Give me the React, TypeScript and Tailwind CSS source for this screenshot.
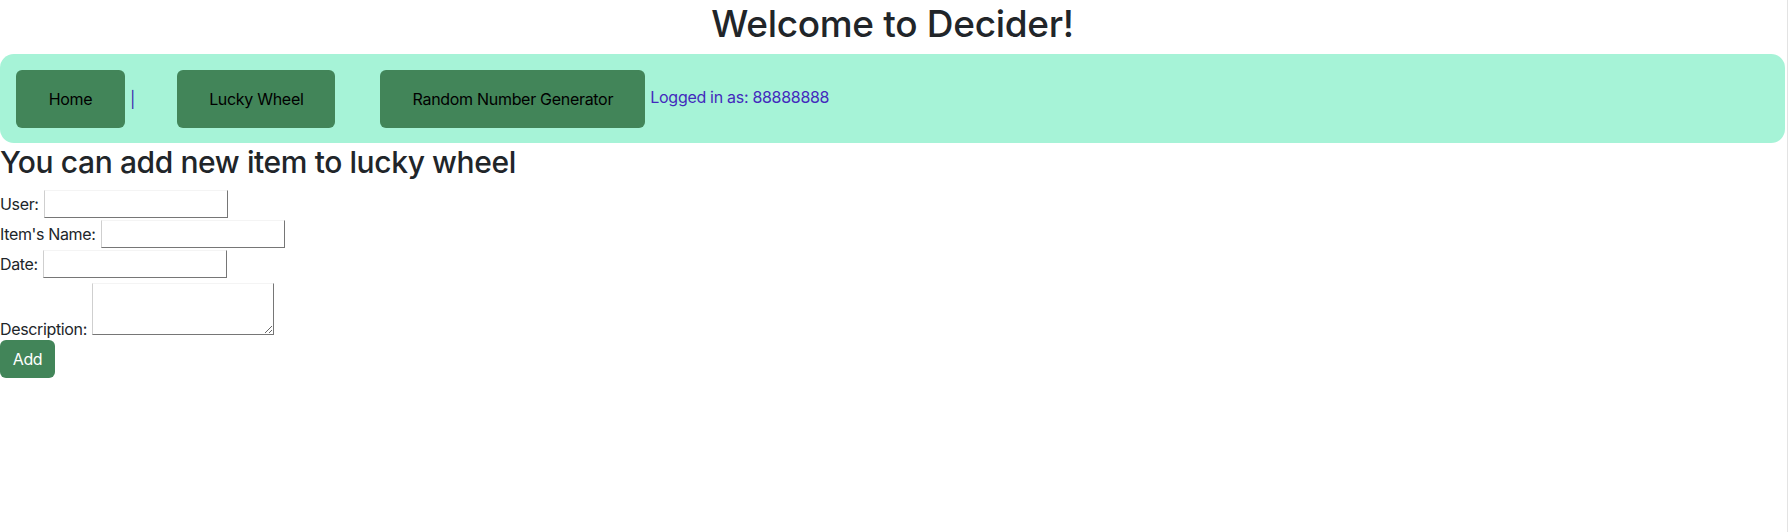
import React from "react";

const font = { fontFamily: "Inter, 'Noto Sans', 'Liberation Sans', sans-serif" };

const fieldCls =
  "h-[28px] border border-[#767676] border-t-[#f4f4f4] border-l-[#cfcfcf] px-[2px] outline-none";

function NavButton({ label, width }: { label: string; width: string }) {
  return (
    <button
      className={`h-[58px] ${width} rounded-[6px] bg-[#428559] text-[16px] tracking-[-0.3px] text-black flex items-center justify-center`}
    >
      {label}
    </button>
  );
}

export default function App() {
  return (
    <div className="h-[532px] w-[1788px] bg-white border-r border-[#e3e3e3] text-[#212529]" style={font}>
      <div className="w-[1785px]">
        <h1 className="text-center text-[37px] tracking-[-0.3px] font-medium leading-[48px] mb-[6px]">
          Welcome to Decider!
        </h1>

        <nav className="flex items-center h-[89px] px-[16px] rounded-[14px] bg-[#a6f3d7]">
          <NavButton label="Home" width="w-[109px]" />
          <span className="ml-[5px] mr-[42px] text-[16px] text-[#3a2bb0]">|</span>
          <NavButton label="Lucky Wheel" width="w-[158px]" />
          <div className="w-[45px]" />
          <NavButton label="Random Number Generator" width="w-[265px]" />
          <span className="ml-[5px] -mt-[3px] text-[16px] tracking-[-0.3px] text-[#4329bd]">
            Logged in as: 88888888
          </span>
        </nav>

        <h2 className="text-[30px] tracking-[-0.4px] font-medium leading-[38px] mb-[8px]">
          You can add new item to lucky wheel
        </h2>

        <form className="text-[16px] tracking-[-0.35px]" onSubmit={(e) => e.preventDefault()}>
          <div className="flex items-center h-[30px]">
            <span className="mr-[5px]">User:</span>
            <input type="text" className={`w-[184px] ${fieldCls}`} />
          </div>
          <div className="flex items-center h-[30px]">
            <span className="mr-[5px]">Item's Name:</span>
            <input type="text" className={`w-[184px] ${fieldCls}`} />
          </div>
          <div className="flex items-center h-[30px]">
            <span className="mr-[5px]">Date:</span>
            <input type="text" className={`w-[184px] ${fieldCls}`} />
          </div>
          <div className="flex items-end h-[58px] pb-[2px]">
            <span className="mr-[5px] leading-[20px] -mb-[4px]">Description:</span>
            <textarea className="w-[182px] h-[52px] border border-[#767676] border-t-[#f4f4f4] border-l-[#cfcfcf] outline-none resize" />
          </div>
          <button
            type="submit"
            className="mt-[3px] h-[38px] w-[55px] rounded-[6px] bg-[#428559] text-white text-[16px] flex items-center justify-center"
          >
            Add
          </button>
        </form>
      </div>
    </div>
  );
}
